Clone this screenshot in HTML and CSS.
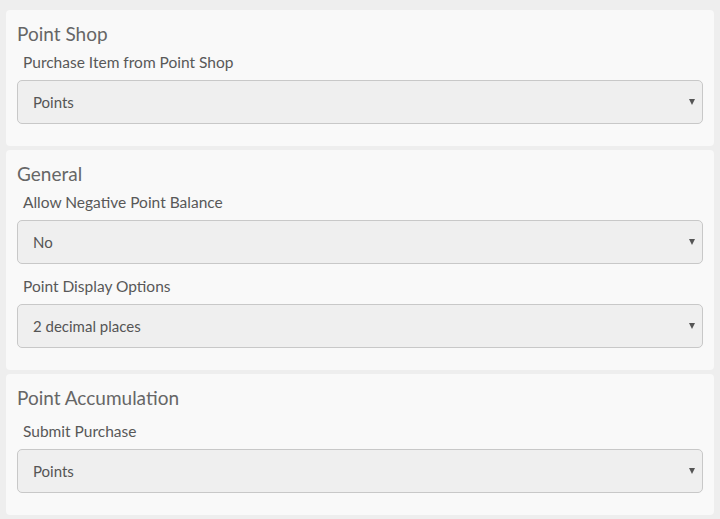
FILE: index.html
```html
<!DOCTYPE html>
<html lang="en">
<head>
    <meta charset="UTF-8">
    <meta name="viewport" content="width=device-width, initial-scale=1.0">
    <title>Point Settings</title>
    <link rel="stylesheet" href="styles.css">
</head>
<body>
    <div class="settings">
        <section class="panel">
            <h2 class="panel-title">Point Shop</h2>
            <div class="field">
                <label for="shop-purchase">Purchase Item from Point Shop</label>
                <div class="select-wrap">
                    <select id="shop-purchase">
                        <option>Points</option>
                    </select>
                </div>
            </div>
        </section>

        <section class="panel">
            <h2 class="panel-title">General</h2>
            <div class="field">
                <label for="negative-balance">Allow Negative Point Balance</label>
                <div class="select-wrap">
                    <select id="negative-balance">
                        <option>No</option>
                        <option>Yes</option>
                    </select>
                </div>
            </div>
            <div class="field">
                <label for="display-options">Point Display Options</label>
                <div class="select-wrap">
                    <select id="display-options">
                        <option>2 decimal places</option>
                    </select>
                </div>
            </div>
        </section>

        <section class="panel">
            <h2 class="panel-title title-spaced">Point Accumulation</h2>
            <div class="field">
                <label for="submit-purchase">Submit Purchase</label>
                <div class="select-wrap">
                    <select id="submit-purchase">
                        <option>Points</option>
                    </select>
                </div>
            </div>
        </section>
    </div>
</body>
</html>
```

FILE: styles.css
```css
body {
    margin: 0;
    background-color: #eeeeee;
    font-family: 'Lato', 'Open Sans', sans-serif;
    color: #555;
}

.settings {
    display: flex;
    flex-direction: column;
    gap: 4px;
    padding: 10px 6px;
}

.panel {
    background-color: #f9f9f9;
    border-radius: 4px;
    padding: 12px 11px 22px;
}

.panel-title {
    margin: 0 0 6px;
    font-size: 19px;
    font-weight: normal;
    line-height: 24px;
    color: #666;
}

/* last section sits a bit lower under its title */
.title-spaced {
    margin-bottom: 11px;
}

.field + .field {
    margin-top: 12px;
}

label {
    display: block;
    padding-left: 6px;
    margin-bottom: 8px;
    font-size: 15.5px;
    line-height: 20px;
    color: #585858;
}

.select-wrap {
    position: relative;
}

.select-wrap::after {
    content: "";
    position: absolute;
    right: 8px;
    top: 19px;
    border-left: 3px solid transparent;
    border-right: 3px solid transparent;
    border-top: 6px solid #555;
    pointer-events: none;
}

select {
    display: block;
    width: 100%;
    height: 44px;
    padding: 0 15px;
    border: 1px solid #c8c8c8;
    border-radius: 5px;
    background-color: #efefef;
    font-family: inherit;
    font-size: 15px;
    color: #555;
    appearance: none;
    -webkit-appearance: none;
}
```
